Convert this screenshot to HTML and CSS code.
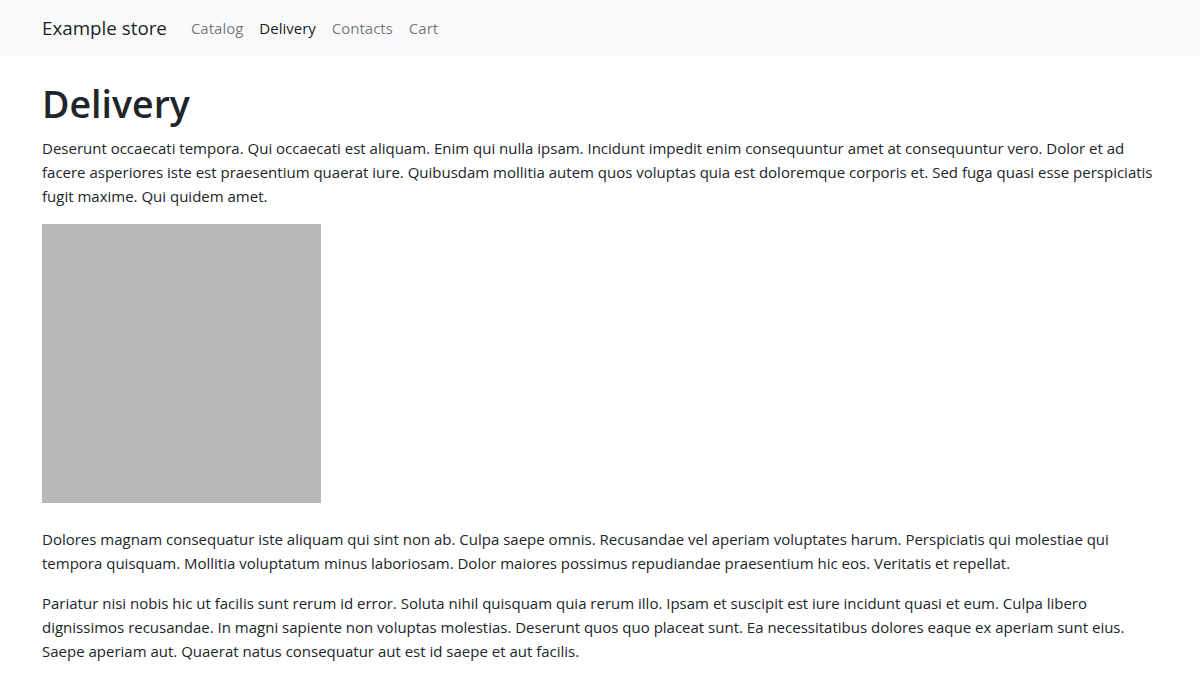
FILE: index.html
```html
<!DOCTYPE html>
<html lang="en">
<head>
<meta charset="utf-8">
<title>Delivery - Example store</title>
<link rel="stylesheet" href="styles.css">
</head>
<body>
<nav class="navbar">
  <div class="container nav-inner">
    <a class="brand" href="#">Example store</a>
    <ul class="nav-links">
      <li><a class="nav-link" href="#">Catalog</a></li>
      <li><a class="nav-link active" href="#">Delivery</a></li>
      <li><a class="nav-link" href="#">Contacts</a></li>
      <li><a class="nav-link" href="#">Cart</a></li>
    </ul>
  </div>
</nav>
<main class="container main">
  <h1 class="title">Delivery</h1>
  <p>Deserunt occaecati tempora. Qui occaecati est aliquam. Enim qui nulla ipsam. Incidunt impedit enim consequuntur amet at consequuntur vero. Dolor et ad<br>facere asperiores iste est praesentium quaerat iure. Quibusdam mollitia autem quos voluptas quia est doloremque corporis et. Sed fuga quasi esse perspiciatis<br>fugit maxime. Qui quidem amet.</p>
  <div class="placeholder" role="img" aria-label="Image placeholder"></div>
  <p>Dolores magnam consequatur iste aliquam qui sint non ab. Culpa saepe omnis. Recusandae vel aperiam voluptates harum. Perspiciatis qui molestiae qui<br>tempora quisquam. Mollitia voluptatum minus laboriosam. Dolor maiores possimus repudiandae praesentium hic eos. Veritatis et repellat.</p>
  <p>Pariatur nisi nobis hic ut facilis sunt rerum id error. Soluta nihil quisquam quia rerum illo. Ipsam et suscipit est iure incidunt quasi et eum. Culpa libero<br>dignissimos recusandae. In magni sapiente non voluptas molestias. Deserunt quos quo placeat sunt. Ea necessitatibus dolores eaque ex aperiam sunt eius.<br>Saepe aperiam aut. Quaerat natus consequatur aut est id saepe et aut facilis.</p>
</main>
</body>
</html>
```
FILE: styles.css
```css
* { box-sizing: border-box; }
html, body { margin: 0; padding: 0; }
body {
  font-family: "Open Sans", "Noto Sans", Arial, sans-serif;
  font-size: 15px;
  line-height: 24px;
  color: #212529;
  background: #fff;
}
.container {
  max-width: 1140px;
  margin: 0 auto;
  padding: 0 12px;
}
.navbar {
  background: #f8f9fa;
  padding: 8px 0;
}
.nav-inner {
  display: flex;
  align-items: center;
}
.brand {
  font-size: 18.8px;
  line-height: 30px;
  padding: 5px 0;
  margin-right: 16px;
  color: rgba(0, 0, 0, 0.9);
  text-decoration: none;
}
.nav-links {
  display: flex;
  list-style: none;
  margin: 0;
  padding: 0;
}
.nav-link {
  display: block;
  padding: 8px 8px;
  color: rgba(0, 0, 0, 0.55);
  text-decoration: none;
}
.nav-link.active { color: rgba(0, 0, 0, 0.9); }
.main { padding-top: 24px; }
.title {
  font-size: 37.5px;
  line-height: 48px;
  font-weight: 600;
  margin: 0 0 8px;
}
p { margin: 0 0 16px; }
.placeholder {
  width: 279px;
  height: 279px;
  background: #b9b9b9;
  margin-bottom: 24px;
}
```
